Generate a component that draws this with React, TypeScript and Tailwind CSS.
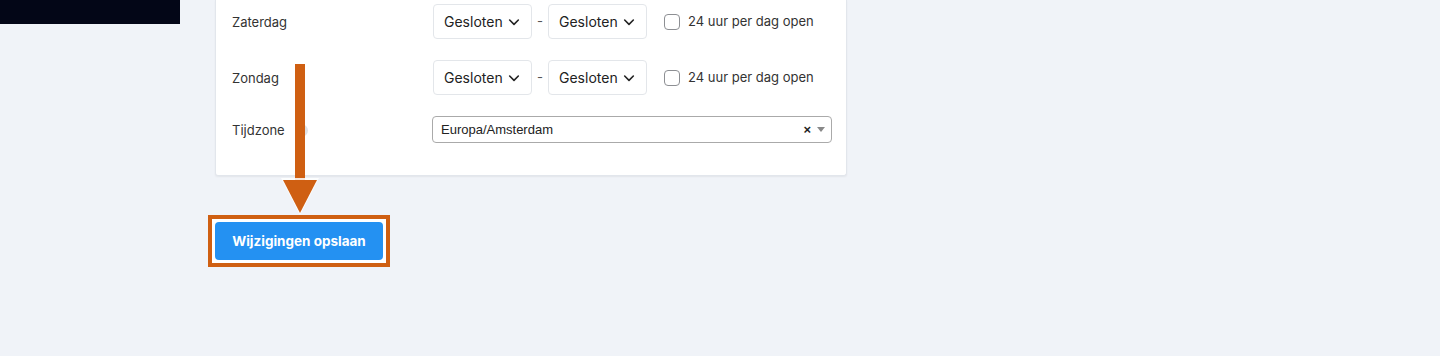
import React from "react";

function Chevron() {
  return (
    <svg width="16" height="16" viewBox="0 0 24 24" fill="none" stroke="#222" strokeWidth="2.4" strokeLinecap="round" strokeLinejoin="round">
      <path d="M5.5 9l6.5 6.5 6.5-6.5" />
    </svg>
  );
}

function HourSelect() {
  return (
    <div className="flex h-[35px] w-[99px] items-center justify-between rounded-[4px] border border-[#e3e6ea] bg-white pl-[10px] pr-[9px] text-[14px] text-[#222]">
      <span>Gesloten</span>
      <Chevron />
    </div>
  );
}

function DayRow({ label }: { label: string }) {
  return (
    <div className="flex items-center">
      <div className="mt-[2px] w-[201px] text-[13px] text-[#333]">{label}</div>
      <HourSelect />
      <span className="w-[16px] text-center text-[13px] text-[#555]">-</span>
      <HourSelect />
      <div className="ml-[17px] flex items-center gap-[8px]">
        <div className="h-[16px] w-[16px] rounded-[4px] border border-[#8d8f93] bg-white" />
        <span className="mt-[1px] text-[13px] text-[#333]">24 uur per dag open</span>
      </div>
    </div>
  );
}

export default function App() {
  return (
    <div
      className="relative flex h-[356px] w-[1440px] bg-[#f0f3f8]"
      style={{ fontFamily: "Inter, 'Noto Sans', sans-serif" }}
    >
      <div className="w-[180px] shrink-0">
        <div className="h-[24px] bg-[#030617]" />
      </div>
      <div className="pl-[35px]">
        <div className="w-[632px] rounded-b-[3px] border-x border-b border-[#e2e6ec] bg-white pb-[32px] pl-[16px] pt-[4px] shadow-[0_1px_2px_rgba(0,0,0,0.06)]">
          <div className="flex flex-col gap-[21px]">
            <DayRow label="Zaterdag" />
            <DayRow label="Zondag" />
            <div className="flex items-center">
              <div className="mt-[2px] flex w-[200px] items-center gap-[10px] text-[13px] text-[#333]">
                <span>Tijdzone</span>
                <span className="flex h-[13px] w-[13px] items-center justify-center rounded-full bg-[#dfe2e6] text-[8px] text-white">?</span>
              </div>
              <div
                className="flex h-[27px] w-[400px] items-center justify-between rounded-[4px] border border-[#aaaaaa] bg-white pl-[8px] pr-[6px] text-[13px] text-[#222]"
                style={{ fontFamily: "'Liberation Sans', Arial, sans-serif" }}
              >
                <span>Europa/Amsterdam</span>
                <div className="flex items-center gap-[6px]">
                  <span className="text-[13px] font-bold leading-none text-[#222]">×</span>
                  <svg width="8" height="5" viewBox="0 0 8 5">
                    <path d="M0 0h8L4 5z" fill="#888" />
                  </svg>
                </div>
              </div>
            </div>
          </div>
        </div>
        <div className="ml-[-7px] mt-[39px] inline-flex border-4 border-[#cf5f12] bg-white p-[3px]">
          <button className="flex h-[38px] w-[168px] items-center justify-center rounded-[4px] bg-[#2491f2] text-[13.5px] font-bold text-white">
            Wijzigingen opslaan
          </button>
        </div>
      </div>
      <svg className="absolute left-[278px] top-[60px]" width="44" height="156" viewBox="0 0 44 156">
        <rect x="17" y="4" width="10" height="120" fill="#cf5f12" />
        <path d="M3 118 L41 118 L22 155 Z" fill="#ffffff" opacity="0.85" />
        <path d="M5 120 L39 120 L22 153 Z" fill="#cf5f12" />
      </svg>
    </div>
  );
}
